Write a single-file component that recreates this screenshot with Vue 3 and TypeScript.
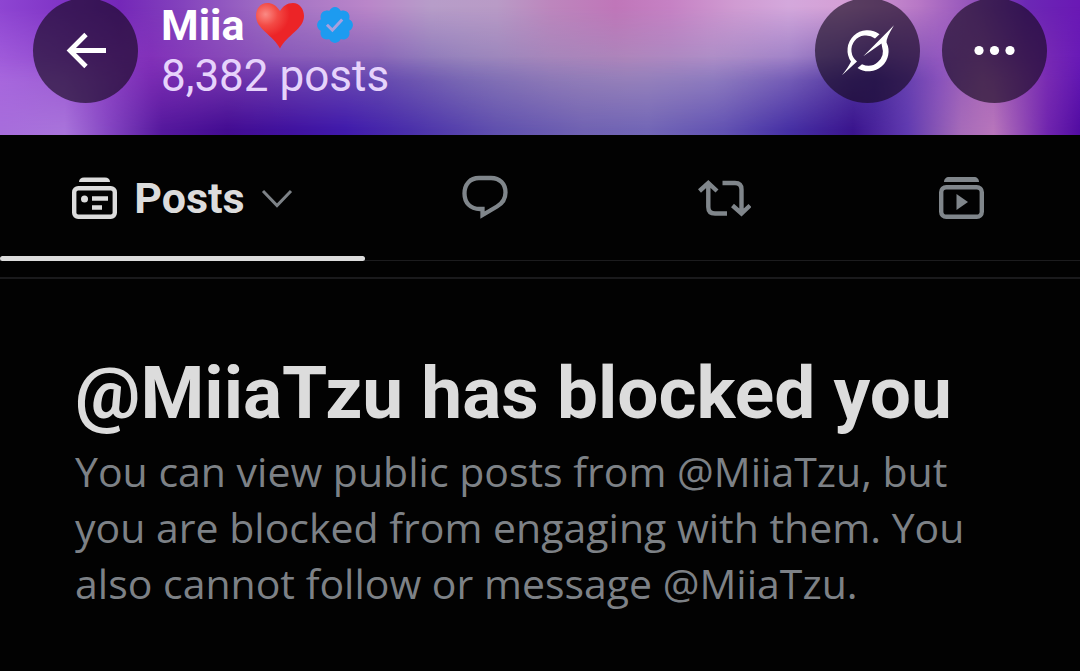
<script setup lang="ts">
interface Tab {
  id: string
  label: string
}

const handle = '@MiiaTzu'
const postCount = 8382
const tabs: Tab[] = [
  { id: 'replies', label: 'Replies' },
  { id: 'reposts', label: 'Reposts' },
  { id: 'media', label: 'Videos' },
]
</script>

<template>
  <div class="page">
    <header class="banner">
      <div class="wash wash-top"></div>
      <div class="wash wash-middle"></div>
      <div class="wash wash-bottom"></div>
      <div class="bar">
        <button class="round" type="button" aria-label="Back">
          <svg viewBox="0 0 105 105">
            <path d="M73 52.500H37M53 36.500L37 52.500L53 68.500" fill="none" stroke="#fff" stroke-width="4.800" />
          </svg>
        </button>
        <div class="who">
          <h1 class="name">
            <span>Miia</span>
            <svg class="heart" viewBox="0 0 50 48" aria-hidden="true">
              <defs>
                <radialGradient id="heart-fill" cx="0.2" cy="0.25" r="0.5">
                  <stop offset="0" stop-color="#fb8a84" />
                  <stop offset="0.500" stop-color="#f34a45" />
                  <stop offset="1" stop-color="#ec2427" />
                </radialGradient>
              </defs>
              <path d="M25 10C21 4 17 2 12.500 2C5 2 1 8 1 15C1 28 18 34 25 47.500C32 34 49 28 49 15C49 8 44.500 2 38 2C32 2 28 5 25 10Z" fill="url(#heart-fill)" />
            </svg>
            <svg class="badge" viewBox="0 0 22 22" aria-label="Verified account">
              <path fill="#1d9bf0" d="M20.396 11c-.018-.646-.215-1.275-.57-1.816-.354-.54-.852-.972-1.438-1.246.223-.607.27-1.264.14-1.897-.131-.634-.437-1.218-.882-1.687-.47-.445-1.053-.75-1.687-.882-.633-.13-1.290-.083-1.897.140-.273-.587-.704-1.086-1.245-1.440S11.647 1.620 11 1.604c-.646.017-1.273.213-1.813.568s-.969.854-1.240 1.440c-.608-.223-1.267-.272-1.902-.140-.635.130-1.220.436-1.690.882-.445.470-.749 1.055-.878 1.688-.130.633-.080 1.290.144 1.896-.587.274-1.087.705-1.443 1.245-.356.540-.555 1.170-.574 1.817.020.647.218 1.276.574 1.817.356.540.856.972 1.443 1.245-.224.606-.274 1.263-.144 1.896.130.634.433 1.218.877 1.688.470.443 1.054.747 1.687.878.633.132 1.290.084 1.897-.136.274.586.705 1.084 1.246 1.439.540.354 1.170.551 1.816.569.647-.016 1.276-.213 1.817-.567s.972-.854 1.245-1.440c.604.239 1.266.296 1.903.164.636-.132 1.220-.447 1.680-.907.460-.460.776-1.044.908-1.681s.075-1.299-.165-1.903c.586-.274 1.084-.705 1.439-1.246.354-.540.551-1.170.569-1.816z" />
              <path fill="#a9a0de" d="M9.662 14.850l-3.429-3.428 1.093-1.102 2.272 2.272 4.600-4.994 1.147 1.046z" />
            </svg>
          </h1>
          <p class="count">{{ postCount.toLocaleString('en-US') }} posts</p>
        </div>
        <div class="actions">
          <button class="round" type="button" aria-label="Grok">
            <svg viewBox="0 0 105 105">
              <g fill="#fff">
                <path d="M64.500 36.200A20 20 0 0 0 36 63.500Q33.500 69 27 77.200L42 63.500A14.500 14.500 0 0 1 60 40.500Z" />
                <path d="M48.300 58.200L79 27.200Q71 40 71.500 44.500A20 20 0 0 1 42.500 70L47 66.200A14.500 14.500 0 0 0 67 48.500L66.500 45.500Z" />
              </g>
            </svg>
          </button>
          <button class="round" type="button" aria-label="More">
            <svg viewBox="0 0 105 105">
              <g fill="#fff">
                <circle cx="37" cy="52.500" r="4.600" />
                <circle cx="52.500" cy="52.500" r="4.600" />
                <circle cx="68" cy="52.500" r="4.600" />
              </g>
            </svg>
          </button>
        </div>
      </div>
    </header>

    <nav class="tabs" aria-label="Profile sections">
      <button class="tab active" type="button">
        <svg class="glyph" viewBox="0 0 54 54" aria-hidden="true">
          <path d="M11 11C11 8 13 6.500 16 6.500H37C40 6.500 42 8 42 11Z" fill="#dcdcdc" />
          <rect x="6.200" y="17.200" width="40.600" height="28.600" rx="4" fill="none" stroke="#dcdcdc" stroke-width="4.400" />
          <circle cx="16.500" cy="28" r="3.500" fill="#dcdcdc" />
          <path d="M24 27.500H40M24 36.500H34" stroke="#dcdcdc" stroke-width="4.400" />
        </svg>
        <span>Posts</span>
        <svg class="chevron" viewBox="0 0 32 32" aria-hidden="true">
          <path d="M2 9L16 23.500L30 9" fill="none" stroke="#7d8287" stroke-width="3" />
        </svg>
      </button>
      <button v-for="tab in tabs" :key="tab.id" class="tab" type="button" :aria-label="tab.label">
        <svg class="glyph" viewBox="0 0 54 54" aria-hidden="true">
          <path v-if="tab.id === 'replies'" d="M21 7H33C42 7 47.500 13 47.500 21.500C47.500 28 45 32 39 35.500L24.500 44V38H22C12 38 6.500 31.500 6.500 22.500C6.500 13.500 12 7 21 7Z" fill="none" stroke="#80868b" stroke-width="4.300" />
          <g v-else-if="tab.id === 'reposts'" fill="none" stroke="#80868b" stroke-width="4.400">
            <path d="M2.500 20L11.300 12L20 20M11.300 13V36Q11.300 42.500 18 42.500H30" />
            <path d="M25.500 12H38Q44.500 12 44.500 18.500V42M35.500 34.500L44.500 42.500L53 34.500" />
          </g>
          <g v-else>
            <path d="M9 11C9 8 11 6 14 6H39C42 6 44 8 44 11Z" fill="#80868b" />
            <rect x="6.200" y="16.200" width="40.600" height="29.600" rx="5" fill="none" stroke="#80868b" stroke-width="4.400" />
            <path d="M21.500 23V39L33 31Z" fill="#80868b" />
          </g>
        </svg>
      </button>
    </nav>

    <main class="notice">
      <h2>{{ handle }} has blocked you</h2>
      <p>You can view public posts from {{ handle }}, but you are blocked from engaging with them. You also cannot follow or message {{ handle }}.</p>
    </main>
  </div>
</template>

<style>
body {
  margin: 0;
  background: #020202;
}
</style>

<style scoped>
.page {
  min-height: 100vh;
  overflow: hidden;
  background: #020202;
  color: #dcdcdc;
  font-family: "Open Sans", "Noto Sans", sans-serif;
}

h1,
h2,
p {
  margin: 0;
}

button {
  padding: 0;
  border: 0;
  background: none;
  color: inherit;
  font: inherit;
  cursor: pointer;
}

svg {
  display: block;
  flex: none;
}

.banner {
  position: relative;
  height: 135px;
  overflow: hidden;
}

.wash {
  position: absolute;
  inset: 0;
}

.wash-top {
  background: linear-gradient(90deg, #8e45d2 0%, #8236c8 5%, #7427b8 11%, #8443bd 17%, #a170c4 25%, #ba86c9 34%, #b79dc9 40%, #b99bc6 46%, #bd86bd 51%, #c076b9 57%, #c681c4 62%, #d09bd2 68%, #d4a8dc 73%, #d5a0d6 78%, #b878c6 85%, #9454bb 90%, #6c28b5 95%, #6a18b5 100%);
}

.wash-middle {
  background: linear-gradient(90deg, #a764de 0%, #9c58d4 5%, #852fb9 14%, #8440b6 20%, #7b51b4 28%, #7459b2 35%, #8979b7 43%, #9c86ba 51%, #a58cbc 58%, #a08cc4 66%, #8a72bf 73%, #4c34a0 81%, #8850be 87%, #a765b5 91%, #7c2db4 97%, #691bb8 100%);
  mask-image: linear-gradient(180deg, transparent 5%, #000 60%);
}

.wash-bottom {
  background: linear-gradient(90deg, #a76ddb 0%, #a873da 6%, #8546c2 10%, #55189d 15%, #430c92 21%, #40129f 27%, #401aab 32%, #4a30aa 38%, #6050ae 46%, #7062b2 54%, #7266b6 60%, #6252b2 67%, #4630a4 73%, #3a148d 79%, #603ab0 84%, #a66bb9 89%, #b775bb 92%, #7025ae 97%, #520ca2 100%);
  mask-image: linear-gradient(180deg, transparent 42%, #000 96%);
}

.bar {
  position: relative;
  display: flex;
  align-items: flex-start;
  gap: 23px;
  padding: 0 33px;
}

.round {
  width: 105px;
  height: 105px;
  margin-top: -2px;
  flex: none;
  border-radius: 50%;
  background: rgba(20, 8, 30, 0.64);
}

.actions {
  display: flex;
  gap: 22px;
}

.who {
  flex: 1;
  min-width: 0;
  font-family: Roboto, "Open Sans", sans-serif;
}

.name {
  display: flex;
  align-items: center;
  height: 50px;
  color: #fff;
  font-size: 43px;
  font-weight: 700;
  line-height: 50px;
}

.heart {
  width: 50px;
  height: 48px;
  margin-left: 11px;
}

.badge {
  width: 42px;
  height: 42px;
  margin-left: 9px;
}

.count {
  color: #e6d3fb;
  font-size: 44px;
  line-height: 52px;
}

.tabs {
  display: grid;
  grid-template-columns: 365fr 239fr 239fr 237fr;
  height: 125px;
  border-bottom: 1px solid #1c1c1e;
}

.tab {
  display: flex;
  align-items: center;
  justify-content: center;
}

.active {
  position: relative;
  padding-right: 4px;
  font-family: Roboto, "Open Sans", sans-serif;
  font-size: 43px;
  font-weight: 700;
}

.active span {
  margin: 0 16px 0 12px;
}

.active::after {
  content: "";
  position: absolute;
  right: 0;
  bottom: -1px;
  left: 0;
  height: 5px;
  border-radius: 3px;
  background: #dcdcdc;
}

.glyph {
  width: 54px;
  height: 54px;
}

.chevron {
  width: 32px;
  height: 32px;
}

.notice {
  margin-top: 16px;
  padding: 70px 75px;
  border-top: 2px solid #1a1a1c;
}

.notice h2 {
  font-family: Roboto, "Open Sans", sans-serif;
  font-size: 73px;
  font-weight: 700;
  line-height: 88px;
}

.notice p {
  margin-top: 6px;
  color: #7d8186;
  font-size: 41px;
  line-height: 56px;
}
</style>
